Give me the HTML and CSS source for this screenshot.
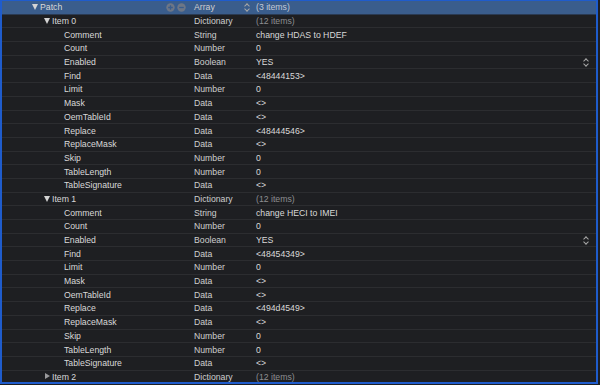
FILE: index.html
```html
<!DOCTYPE html>
<html lang="en">
<head>
    <meta charset="UTF-8">
    <title>Patch - plist</title>
    <link rel="stylesheet" href="styles.css">
</head>
<body>
    <div class="outline">
        <!-- Patch array -->
        <div class="row selected">
            <div class="key lvl0"><span class="tri down"></span>Patch
                <span class="rowbtns">
                    <svg width="20" height="9" viewBox="0 0 20 9"><circle cx="4.5" cy="4.5" r="4.2" fill="#6d7686"/><path d="M4.5 2.2v4.6M2.2 4.5h4.6" stroke="#3a5d8c" stroke-width="1.3"/><circle cx="15.5" cy="4.5" r="4.2" fill="#6d7686"/><path d="M13.2 4.5h4.6" stroke="#3a5d8c" stroke-width="1.3"/></svg>
                </span>
            </div>
            <div class="type">Array<span class="stepper"></span></div>
            <div class="value light">(3 items)</div>
        </div>

        <!-- Item 0 -->
        <div class="row">
            <div class="key lvl1"><span class="tri down"></span>Item 0</div>
            <div class="type">Dictionary</div>
            <div class="value muted">(12 items)</div>
        </div>
        <div class="row"><div class="key lvl2">Comment</div><div class="type">String</div><div class="value">change HDAS to HDEF</div></div>
        <div class="row"><div class="key lvl2">Count</div><div class="type">Number</div><div class="value">0</div></div>
        <div class="row"><div class="key lvl2">Enabled</div><div class="type">Boolean</div><div class="value">YES<span class="stepper"></span></div></div>
        <div class="row"><div class="key lvl2">Find</div><div class="type">Data</div><div class="value">&lt;48444153&gt;</div></div>
        <div class="row"><div class="key lvl2">Limit</div><div class="type">Number</div><div class="value">0</div></div>
        <div class="row"><div class="key lvl2">Mask</div><div class="type">Data</div><div class="value">&lt;&gt;</div></div>
        <div class="row"><div class="key lvl2">OemTableId</div><div class="type">Data</div><div class="value">&lt;&gt;</div></div>
        <div class="row"><div class="key lvl2">Replace</div><div class="type">Data</div><div class="value">&lt;48444546&gt;</div></div>
        <div class="row"><div class="key lvl2">ReplaceMask</div><div class="type">Data</div><div class="value">&lt;&gt;</div></div>
        <div class="row"><div class="key lvl2">Skip</div><div class="type">Number</div><div class="value">0</div></div>
        <div class="row"><div class="key lvl2">TableLength</div><div class="type">Number</div><div class="value">0</div></div>
        <div class="row"><div class="key lvl2">TableSignature</div><div class="type">Data</div><div class="value">&lt;&gt;</div></div>

        <!-- Item 1 -->
        <div class="row">
            <div class="key lvl1"><span class="tri down"></span>Item 1</div>
            <div class="type">Dictionary</div>
            <div class="value muted">(12 items)</div>
        </div>
        <div class="row"><div class="key lvl2">Comment</div><div class="type">String</div><div class="value">change HECI to IMEI</div></div>
        <div class="row"><div class="key lvl2">Count</div><div class="type">Number</div><div class="value">0</div></div>
        <div class="row"><div class="key lvl2">Enabled</div><div class="type">Boolean</div><div class="value">YES<span class="stepper"></span></div></div>
        <div class="row"><div class="key lvl2">Find</div><div class="type">Data</div><div class="value">&lt;48454349&gt;</div></div>
        <div class="row"><div class="key lvl2">Limit</div><div class="type">Number</div><div class="value">0</div></div>
        <div class="row"><div class="key lvl2">Mask</div><div class="type">Data</div><div class="value">&lt;&gt;</div></div>
        <div class="row"><div class="key lvl2">OemTableId</div><div class="type">Data</div><div class="value">&lt;&gt;</div></div>
        <div class="row"><div class="key lvl2">Replace</div><div class="type">Data</div><div class="value">&lt;494d4549&gt;</div></div>
        <div class="row"><div class="key lvl2">ReplaceMask</div><div class="type">Data</div><div class="value">&lt;&gt;</div></div>
        <div class="row"><div class="key lvl2">Skip</div><div class="type">Number</div><div class="value">0</div></div>
        <div class="row"><div class="key lvl2">TableLength</div><div class="type">Number</div><div class="value">0</div></div>
        <div class="row"><div class="key lvl2">TableSignature</div><div class="type">Data</div><div class="value">&lt;&gt;</div></div>

        <!-- Item 2 (collapsed) -->
        <div class="row">
            <div class="key lvl1"><span class="tri right"></span>Item 2</div>
            <div class="type">Dictionary</div>
            <div class="value muted">(12 items)</div>
        </div>
    </div>
</body>
</html>
```

FILE: styles.css
```css
html, body {
    margin: 0;
    padding: 0;
    background-color: #1e1f22;
}
body {
    font-family: 'Liberation Sans', Arial, sans-serif;
    font-size: 8.7px;
    color: #d9d9d9;
    width: 600px;
    height: 385px;
    overflow: hidden;
}
.outline {
    width: 594px;
    height: 381px;
    border: 2px solid #1f5ccc;
    border-top-width: 1px;
    background-color: #1e1f22;
    overflow: hidden;
}
.row {
    display: grid;
    grid-template-columns: 192px 62px 1fr;
    height: 13.7px;
    box-sizing: border-box;
    border-bottom: 1px solid #2c2d30;
    align-items: center;
}
.row.selected {
    background-color: #3a5d8c;
    border-bottom-color: #2a3a52;
}
.key, .type, .value {
    display: flex;
    align-items: center;
    white-space: nowrap;
    line-height: 12px;
}
.key.lvl0 { padding-left: 30px; padding-right: 8px; }
.key.lvl1 { padding-left: 42px; }
.key.lvl2 { padding-left: 62px; }
.type {
    color: #cfcfcf;
    justify-content: space-between;
    padding-right: 6px;
}
.value {
    justify-content: space-between;
    padding-right: 7px;
}
.value.muted { color: #8d8e91; }
.value.light { color: #c3cad6; }
.tri {
    display: inline-block;
    width: 8px;
    height: 6px;
    position: relative;
}
.tri.down::before {
    content: "";
    position: absolute;
    left: 0;
    top: 0;
    border-left: 3.5px solid transparent;
    border-right: 3.5px solid transparent;
    border-top: 6px solid #d4d4d4;
}
.tri.right::before {
    content: "";
    position: absolute;
    left: 1px;
    top: -0.5px;
    border-top: 3.5px solid transparent;
    border-bottom: 3.5px solid transparent;
    border-left: 5px solid #9a9a9c;
}
.rowbtns {
    margin-left: auto;
    display: flex;
}
.stepper {
    display: inline-block;
    width: 6px;
    height: 9px;
    position: relative;
}
.stepper::before, .stepper::after {
    content: "";
    position: absolute;
    left: 1px;
    width: 3px;
    height: 3px;
    border-left: 1px solid #a8a8a8;
    border-top: 1px solid #a8a8a8;
}
.stepper::before {
    top: 1px;
    transform: rotate(45deg);
}
.stepper::after {
    top: 4px;
    transform: rotate(-135deg);
}
```
